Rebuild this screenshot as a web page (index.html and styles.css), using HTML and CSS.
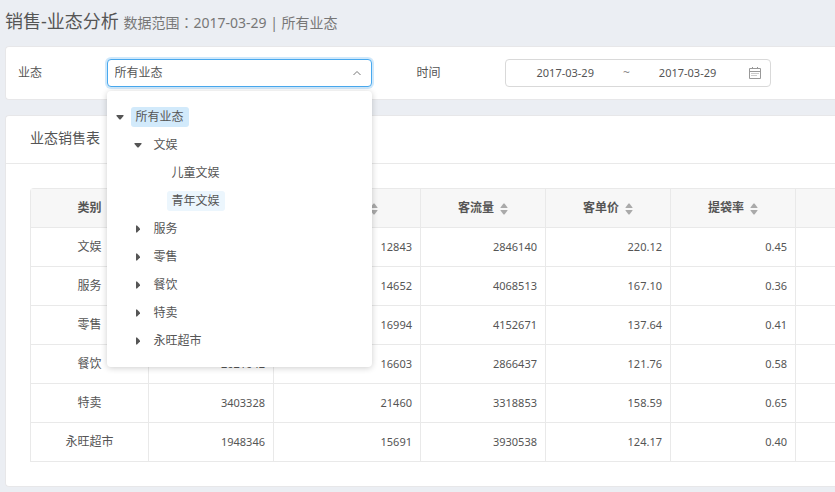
FILE: index.html
```
<!DOCTYPE html>
<html lang="zh-CN">
<head>
    <meta charset="UTF-8">
    <meta name="viewport" content="width=device-width, initial-scale=1.0">
    <title>销售-业态分析</title>
    <link rel="stylesheet" href="styles.css">
</head>
<body>

    <svg class="icon-defs" aria-hidden="true">
        <symbol id="caret-down" viewBox="0 0 8 5"><path d="M0.5 0h7v1L4.5 4.5h-1L0.5 1z"/></symbol>
        <symbol id="caret-right" viewBox="0 0 4 8"><path d="M0 0.5h1L4 3.5v1L1 7.5h-1z"/></symbol>
        <symbol id="sort" viewBox="0 0 8 12"><path d="M0.5 5V4.5L3.5 0.5h1L7.5 4.5V5zM0.5 7v0.5L3.5 11.5h1L7.5 7.5V7z"/></symbol>
    </svg>

    <h1 class="page-title">销售-业态分析 <small>数据范围<span class="colon" lang="zh-TW">：</span>2017-03-29 | 所有业态</small></h1>

    <!-- Filters -->
    <form class="card filters">
        <div class="field">
            <label for="format">业态</label>
            <div class="select">
                <select id="format">
                    <option selected>所有业态</option>
                </select>
                <svg class="select-arrow" viewBox="0 0 8 6"><path d="M0.5 5L4 1.5 7.5 5"/></svg>

                <div class="dropdown">
                    <ul class="tree">
                        <li>
                            <div class="node"><button type="button" class="toggle" aria-label="收起"><svg class="down"><use href="#caret-down"/></svg></button><span class="name selected">所有业态</span></div>
                            <ul>
                                <li>
                                    <div class="node"><button type="button" class="toggle" aria-label="收起"><svg class="down"><use href="#caret-down"/></svg></button><span class="name">文娱</span></div>
                                    <ul>
                                        <li><div class="node leaf"><span class="name">儿童文娱</span></div></li>
                                        <li><div class="node leaf"><span class="name hover">青年文娱</span></div></li>
                                    </ul>
                                </li>
                                <li><div class="node"><button type="button" class="toggle" aria-label="展开"><svg class="right"><use href="#caret-right"/></svg></button><span class="name">服务</span></div></li>
                                <li><div class="node"><button type="button" class="toggle" aria-label="展开"><svg class="right"><use href="#caret-right"/></svg></button><span class="name">零售</span></div></li>
                                <li><div class="node"><button type="button" class="toggle" aria-label="展开"><svg class="right"><use href="#caret-right"/></svg></button><span class="name">餐饮</span></div></li>
                                <li><div class="node"><button type="button" class="toggle" aria-label="展开"><svg class="right"><use href="#caret-right"/></svg></button><span class="name">特卖</span></div></li>
                                <li><div class="node"><button type="button" class="toggle" aria-label="展开"><svg class="right"><use href="#caret-right"/></svg></button><span class="name">永旺超市</span></div></li>
                            </ul>
                        </li>
                    </ul>
                </div>
            </div>
        </div>

        <div class="field">
            <label for="start">时间</label>
            <div class="range">
                <input type="text" id="start" value="2017-03-29">
                <span class="tilde">~</span>
                <input type="text" id="end" value="2017-03-29" aria-label="结束时间">
                <svg class="calendar" viewBox="0 0 12 12"><path d="M0.5 1.5h11v10h-11zM0.5 4.5h11M3.5 0v2M8.5 0v2"/><path d="M2.5 6.5h7M2.5 8.5h5" stroke-dasharray="1 1"/></svg>
            </div>
        </div>
    </form>

    <!-- Sales table -->
    <section class="card">
        <h2 class="card-title">业态销售表</h2>
        <div class="card-body">
            <table class="sales">
                <colgroup>
                    <col class="col-name">
                    <col class="col-num">
                    <col class="col-wide">
                    <col class="col-num">
                    <col class="col-num">
                    <col class="col-num">
                    <col>
                </colgroup>
                <thead>
                    <tr>
                        <th>类别</th>
                        <th>销售额<button type="button" class="sort" aria-label="排序"><svg><use href="#sort"/></svg></button></th>
                        <th>成交笔数<button type="button" class="sort" aria-label="排序"><svg><use href="#sort"/></svg></button></th>
                        <th>客流量<button type="button" class="sort" aria-label="排序"><svg><use href="#sort"/></svg></button></th>
                        <th>客单价<button type="button" class="sort" aria-label="排序"><svg><use href="#sort"/></svg></button></th>
                        <th>提袋率<button type="button" class="sort" aria-label="排序"><svg><use href="#sort"/></svg></button></th>
                        <th></th>
                    </tr>
                </thead>
                <tbody>
                    <tr><td>文娱</td><td></td><td>12843</td><td>2846140</td><td>220.12</td><td>0.45</td><td></td></tr>
                    <tr><td>服务</td><td></td><td>14652</td><td>4068513</td><td>167.10</td><td>0.36</td><td></td></tr>
                    <tr><td>零售</td><td></td><td>16994</td><td>4152671</td><td>137.64</td><td>0.41</td><td></td></tr>
                    <tr><td>餐饮</td><td>2021042</td><td>16603</td><td>2866437</td><td>121.76</td><td>0.58</td><td></td></tr>
                    <tr><td>特卖</td><td>3403328</td><td>21460</td><td>3318853</td><td>158.59</td><td>0.65</td><td></td></tr>
                    <tr><td>永旺超市</td><td>1948346</td><td>15691</td><td>3930538</td><td>124.17</td><td>0.40</td><td></td></tr>
                </tbody>
            </table>
        </div>
    </section>

</body>
</html>
```

FILE: styles.css
```
* {
    box-sizing: border-box;
}

body {
    font-family: "Noto Sans", "Noto Sans CJK SC", sans-serif;
    font-size: 12px;
    line-height: 20px;
    color: #555;
    background-color: #ebeef3;
    margin: 0;
    padding: 0 0 0 5px;
    overflow-x: hidden;
}

ul {
    list-style: none;
    margin: 0;
    padding: 0;
}

button {
    padding: 0;
    background: none;
    border: none;
    color: inherit;
    cursor: pointer;
}

svg {
    display: block;
    fill: currentColor;
}

.icon-defs {
    display: none;
}

.page-title {
    font-size: 18px;
    font-weight: 400;
    line-height: 24px;
    margin: 0;
    padding: 9px 0 11px;
}

.page-title small {
    font-size: 14px;
    color: #777;
}

.colon {
    font-family: "Noto Sans CJK TC", sans-serif;
}

.card {
    background-color: white;
    border: 1px solid #e7e7e9;
    border-right: none;
    border-radius: 4px 0 0 4px;
    margin-bottom: 15px;
}

/* Filters */
.filters {
    display: grid;
    grid-template-columns: 1fr 1fr;
    padding: 12px 20px 12px 12px;
}

.field {
    display: grid;
    grid-template-columns: minmax(0, 2fr) minmax(0, 6fr) minmax(0, 1fr);
    align-items: center;
}

.select {
    position: relative;
}

.select select {
    display: block;
    width: 100%;
    height: 28px;
    padding: 0 7px;
    font: inherit;
    color: inherit;
    background-color: white;
    border: 1px solid #49a9ee;
    border-radius: 4px;
    box-shadow: 0 0 0 2px rgba(16, 142, 233, 0.2);
    appearance: none;
    outline: none;
}

.select-arrow {
    position: absolute;
    top: 11px;
    right: 11px;
    width: 8px;
    height: 6px;
    fill: none;
    stroke: #777;
}

.dropdown {
    position: absolute;
    top: 32px;
    left: 0;
    z-index: 10;
    width: 100%;
    padding: 12px 0;
    background-color: white;
    border-radius: 4px;
    box-shadow: 0 1px 6px rgba(0, 0, 0, 0.2);
}

.tree ul {
    padding-left: 18px;
}

.node {
    display: flex;
    align-items: center;
    height: 28px;
}

.leaf {
    padding-left: 24px;
}

.toggle {
    display: flex;
    justify-content: center;
    width: 24px;
    padding-left: 3px;
}

.down {
    width: 8px;
    height: 5px;
}

.right {
    width: 4px;
    height: 8px;
}

.name {
    padding: 0 5px;
    border-radius: 3px;
}

.selected {
    background-color: #d2eafb;
}

.hover {
    background-color: #ecf6fd;
}

.range {
    display: flex;
    align-items: center;
    height: 28px;
    padding: 0 9px 0 6px;
    border: 1px solid #d9d9d9;
    border-radius: 4px;
}

.range input {
    flex: 1;
    min-width: 0;
    padding: 0;
    font: inherit;
    font-size: 11px;
    color: inherit;
    text-align: center;
    background: none;
    border: none;
    outline: none;
}

.tilde {
    width: 16px;
    text-align: center;
    color: #888;
}

.calendar {
    width: 12px;
    height: 12px;
    margin-left: 8px;
    fill: none;
    stroke: #999;
}

/* Sales table */
.card-title {
    font-size: 14px;
    font-weight: 400;
    line-height: 20px;
    margin: 0;
    padding: 12px 24px 15px;
    border-bottom: 1px solid #e9e9e9;
}

.card-body {
    padding: 24px 0 24px 24px;
    overflow: hidden;
}

.sales {
    table-layout: fixed;
    width: 100%;
    border-collapse: separate;
    border-spacing: 0;
    border-top: 1px solid #e9e9e9;
    border-left: 1px solid #e9e9e9;
    border-radius: 4px 0 0 0;
}

.col-name {
    width: 118px;
}

.col-num {
    width: 125px;
}

.col-wide {
    width: 147px;
}

.sales th,
.sales td {
    height: 39px;
    padding: 0 8px;
    border-bottom: 1px solid #e9e9e9;
    border-right: 1px solid #e9e9e9;
}

.sales th:last-child,
.sales td:last-child {
    border-right: none;
}

.sales th {
    background-color: #f7f7f7;
    font-weight: 700;
}

.sales td {
    font-size: 11px;
    text-align: right;
}

.sales td:first-child {
    font-size: 12px;
    text-align: center;
}

.sort {
    margin-left: 6px;
    color: #aaa;
    vertical-align: middle;
}

.sort svg {
    width: 8px;
    height: 12px;
}
```
